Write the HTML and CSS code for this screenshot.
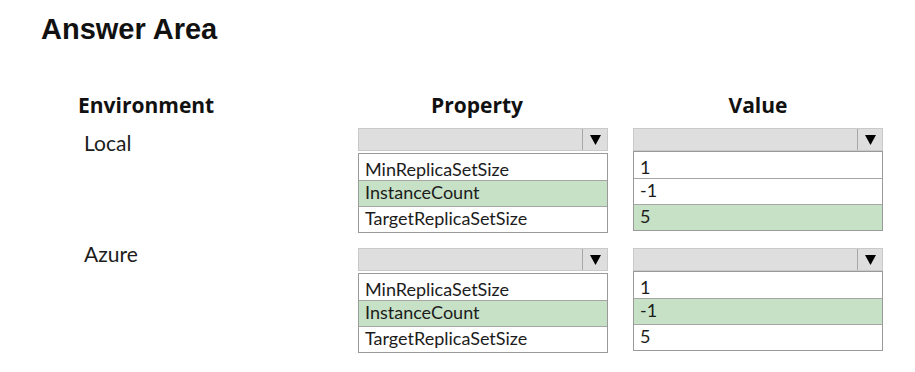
FILE: index.html
```html
<!DOCTYPE html>
<html lang="en">
<head>
  <meta charset="UTF-8">
  <meta name="viewport" content="width=device-width, initial-scale=1.0">
  <title>Answer Area</title>
  <link rel="stylesheet" href="styles.css">
</head>
<body>
  <div class="answer-area">
    <h1>Answer Area</h1>

    <div class="row head-row">
      <div class="env-col col-head">Environment</div>
      <div class="prop-col col-head center property-head">Property</div>
      <div class="value-col col-head center">Value</div>
    </div>

    <div class="row section">
      <div class="env-col env-label">Local</div>
      <div class="prop-col dropdown">
        <div class="dd-head">
          <span class="dd-arrow"><svg width="11" height="10" viewBox="0 0 11 10"><polygon points="0,0 11,0 5.5,10" fill="#000"/></svg></span>
        </div>
        <ul class="dd-list gap">
          <li>MinReplicaSetSize</li>
          <li class="picked">InstanceCount</li>
          <li>TargetReplicaSetSize</li>
        </ul>
      </div>
      <div class="value-col dropdown">
        <div class="dd-head">
          <span class="dd-arrow"><svg width="11" height="10" viewBox="0 0 11 10"><polygon points="0,0 11,0 5.5,10" fill="#000"/></svg></span>
        </div>
        <ul class="dd-list">
          <li>1</li>
          <li>-1</li>
          <li class="picked">5</li>
        </ul>
      </div>
    </div>

    <div class="row section">
      <div class="env-col env-label azure">Azure</div>
      <div class="prop-col dropdown">
        <div class="dd-head">
          <span class="dd-arrow"><svg width="11" height="10" viewBox="0 0 11 10"><polygon points="0,0 11,0 5.5,10" fill="#000"/></svg></span>
        </div>
        <ul class="dd-list gap">
          <li>MinReplicaSetSize</li>
          <li class="picked">InstanceCount</li>
          <li>TargetReplicaSetSize</li>
        </ul>
      </div>
      <div class="value-col dropdown">
        <div class="dd-head">
          <span class="dd-arrow"><svg width="11" height="10" viewBox="0 0 11 10"><polygon points="0,0 11,0 5.5,10" fill="#000"/></svg></span>
        </div>
        <ul class="dd-list">
          <li>1</li>
          <li class="picked">-1</li>
          <li>5</li>
        </ul>
      </div>
    </div>
  </div>
</body>
</html>
```

FILE: styles.css
```css
body {
  margin: 0;
  background: #ffffff;
  color: #1c1c1c;
  font-family: Lato, "Open Sans", sans-serif;
}
.answer-area { padding: 15px 0 0 41px; }
h1 {
  margin: 0;
  font-family: "Liberation Sans", Arial, sans-serif;
  font-size: 29px;
  line-height: 29px;
  font-weight: bold;
  color: #111;
}
.row { display: flex; margin-left: 37px; }
.env-col { width: 280px; }
.prop-col { width: 250px; }
.value-col { width: 250px; margin-left: 25px; }
.center { text-align: center; }

.head-row { margin-top: 46px; }
.col-head {
  font-family: "Open Sans", Lato, sans-serif;
  font-size: 21px;
  line-height: 30px;
  font-weight: bold;
  color: #111;
}
.property-head { padding-right: 12px; box-sizing: border-box; }

.section { margin-top: 8px; }
.section + .section { margin-top: 15px; }

.env-label {
  font-size: 21px;
  line-height: 24px;
  padding: 3px 0 0 6px;
  box-sizing: border-box;
}
.env-label.azure { padding-top: 0; margin-top: -6px; }

.dd-head {
  height: 23px;
  box-sizing: border-box;
  background: #dedede;
  border: 1px solid #c9c9c9;
  display: flex;
  justify-content: flex-end;
}
.dd-arrow {
  width: 24px;
  border-left: 1px solid #a8a8a8;
  display: flex;
  align-items: center;
  justify-content: center;
}
.dd-list {
  list-style: none;
  margin: 0;
  padding: 0;
  border: 1px solid #9a9a9a;
}
.dd-list.gap { margin-top: 2px; }
.dd-list li {
  height: 26px;
  box-sizing: border-box;
  padding: 5px 0 0 6px;
  font-size: 18px;
  line-height: 20px;
}
.dd-list li + li { border-top: 1px solid #a6a6a6; padding-top: 1px; }
.dd-list li.picked { background: #c6e1c6; }
```
